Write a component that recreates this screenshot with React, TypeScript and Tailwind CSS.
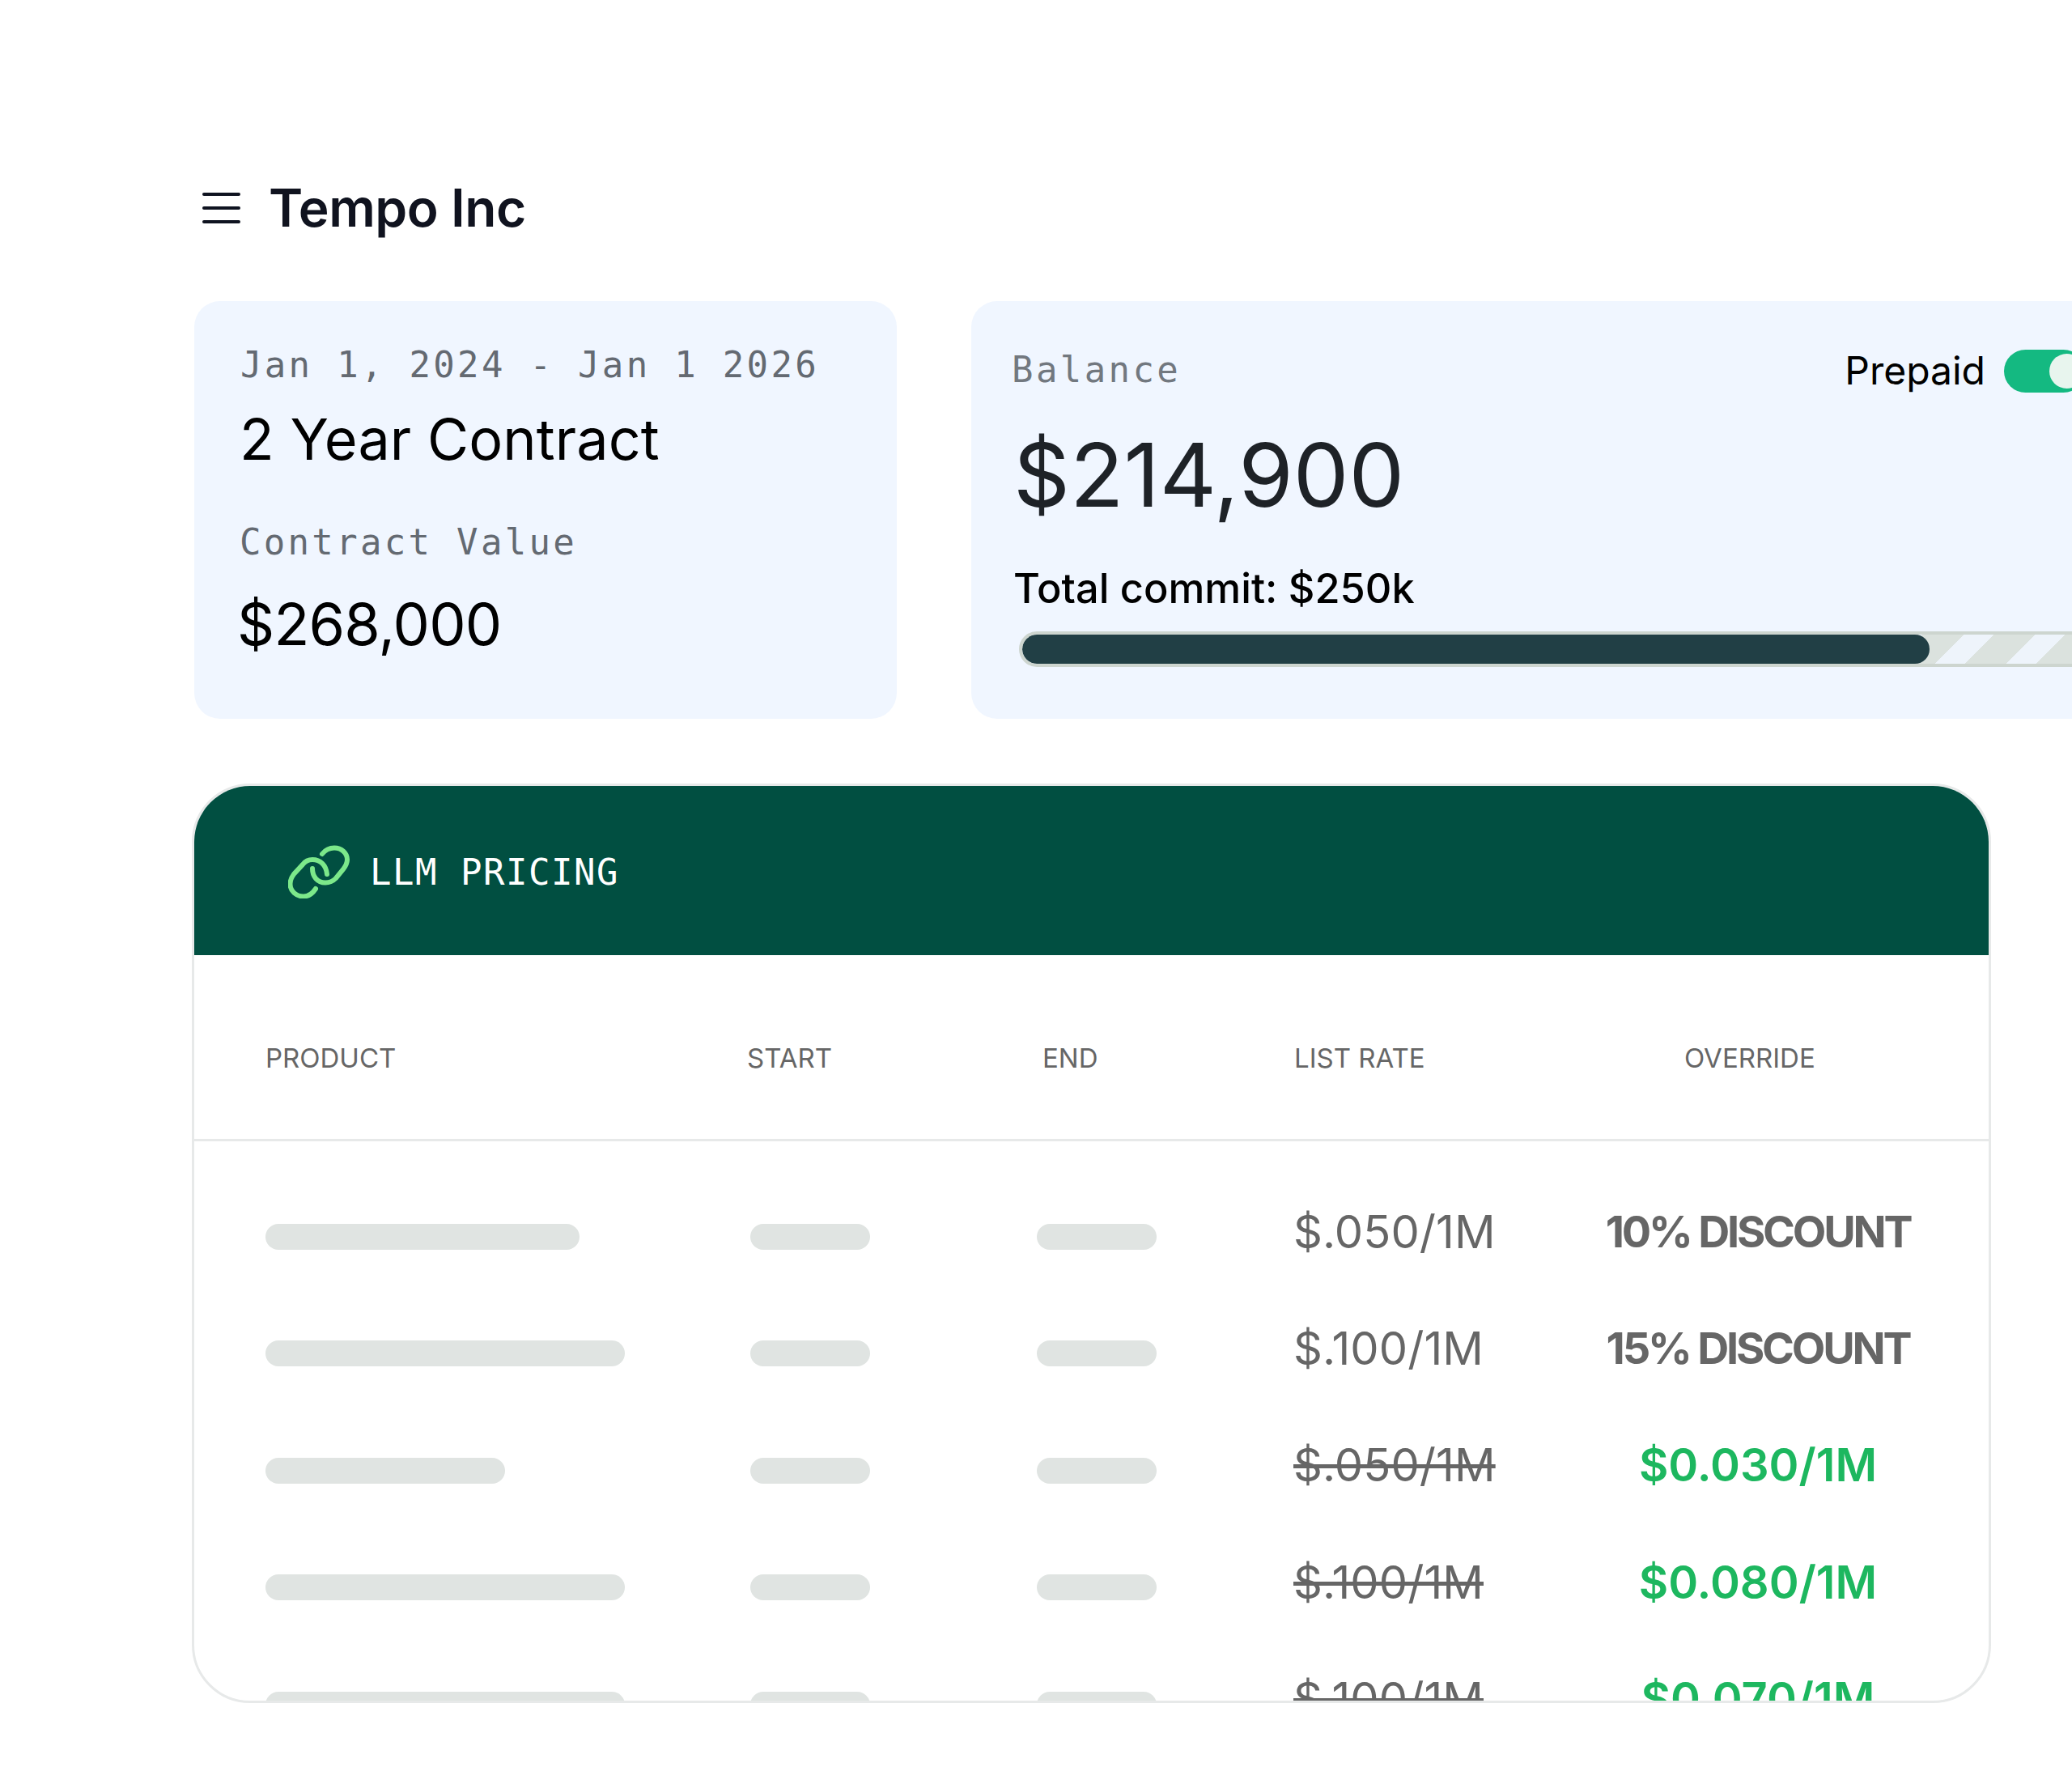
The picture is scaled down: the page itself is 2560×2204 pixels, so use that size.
const mono = "font-['DejaVu_Sans_Mono',monospace]";

const rows = [
  { bar: 'w-[388px]', list: '$.050/1M', override: '10% DISCOUNT', green: false },
  { bar: 'w-[444px]', list: '$.100/1M', override: '15% DISCOUNT', green: false },
  { bar: 'w-[296px]', list: '$.050/1M', override: '$0.030/1M', green: true },
  { bar: 'w-[444px]', list: '$.100/1M', override: '$0.080/1M', green: true },
  { bar: 'w-[444px]', list: '$.100/1M', override: '$0.070/1M', green: true },
];

function LinkIcon() {
  return (
    <svg className="mt-[2px]" width="76" height="66" viewBox="0 0 76 66" fill="none" stroke="#7CE88A" strokeWidth="6" strokeLinecap="round">
      <path d="M42 11C46 6 51 3.5 57 3.5C66 3.5 73 10 73 18C73 23 71 26 68 30L59 41C55 45 51 46.5 46 46.5C36 46.5 30 39 30 29" />
      <path d="M48 36C47 25 40 18 30 18C25 18 21 20 18 24L7 36C4 40 2.5 44 2.5 48C2.5 57 10 63.5 19 63.5C25 63.5 30 60 34 54" />
    </svg>
  );
}

export default function App() {
  return (
    <div className="w-[2560px] h-[2204px] overflow-hidden bg-white pl-[240px] pt-[219px] font-['Inter',sans-serif]">
      {/* Title */}
      <div className="flex items-center h-[76px]">
        <div className="flex flex-col gap-[13px] w-[47px] ml-[10px]">
          <div className="h-[4px] bg-[#0f1320] rounded-full" />
          <div className="h-[4px] bg-[#0f1320] rounded-full" />
          <div className="h-[4px] bg-[#0f1320] rounded-full" />
        </div>
        <h1 className="ml-[35px] text-[64px] leading-[76px] font-semibold text-[#10131f] tracking-[-0.45px]">Tempo Inc</h1>
      </div>

      {/* Summary cards */}
      <div className="flex gap-[92px] mt-[77px] h-[516px] w-[2400px]">
        <div className="w-[868px] shrink-0 rounded-[32px] bg-[#f0f6ff] pl-[57px] pt-[53px]">
          <p className={`${mono} text-[44px] leading-[52px] tracking-[3.3px] text-[#646a72]`}>Jan 1, 2024 - Jan 1 2026</p>
          <p className="mt-[25px] -ml-[1px] text-[70px] leading-[82px] tracking-[0.1px] text-black">2 Year Contract</p>
          <p className={`${mono} mt-[60px] -ml-[1px] text-[44px] leading-[52px] tracking-[3.3px] text-[#646a72]`}>Contract Value</p>
          <p className="mt-[33px] text-[72px] leading-[84px] tracking-[-0.8px] text-black -ml-[4px]">$268,000</p>
        </div>

        <div className="w-[1500px] shrink-0 rounded-[32px] bg-[#f0f6ff] pl-[50px] pt-[53px]">
          <div className="flex items-center justify-between h-[64px] w-[1400px]">
            <p className={`${mono} text-[44px] leading-[52px] tracking-[3.4px] text-[#72787f]`}>Balance</p>
            <div className="flex items-center gap-[23px] mr-[74px] mt-[2px]">
              <span className="text-[48px] leading-[56px] text-black">Prepaid</span>
              <div className="w-[100px] h-[53px] rounded-full bg-[#14b981] pl-[56px] pt-[5px]">
                <div className="w-[43px] h-[43px] rounded-full bg-[#e8f5ee]" />
              </div>
            </div>
          </div>
          <p className="mt-[34px] ml-[2px] text-[109px] leading-[126px] text-[#1e2227]">$214,900</p>
          <p className="mt-[47px] ml-[2px] text-[50.5px] leading-[62px] font-medium text-black">Total commit: $250k</p>
          <div className="mt-[22px] ml-[9px] w-[1500px] h-[44px] rounded-full border-4 border-[#cdd5cf] bg-[#dbe2de] bg-[repeating-linear-gradient(135deg,#dbe2de_0px,#dbe2de_14px,#eef4fb_14px,#eef4fb_40px,#dbe2de_40px,#dbe2de_62.2px)] overflow-hidden">
            <div className="w-[1121px] h-full rounded-full bg-[#213f45]" />
          </div>
        </div>
      </div>

      {/* Pricing table */}
      <div className="mt-[80px] -ml-[3px] w-[2223px] h-[1136px] rounded-[72px] border-[3px] border-[#e7e9e9] bg-white overflow-hidden">
        <div className="flex items-center h-[209px] bg-[#014f41] pl-[116px]">
          <LinkIcon />
          <span className={`${mono} ml-[25px] mt-[4px] text-[44px] leading-[52px] tracking-[1.5px] text-white`}>LLM PRICING</span>
        </div>

        <div className="grid grid-cols-[595px_365px_311px_386px_1fr] items-center h-[230px] pl-[88px] pt-[26px] border-b-[3px] border-[#e7e9e9] text-[33px] leading-[40px] text-[#666666]">
          <span>PRODUCT</span>
          <span>START</span>
          <span>END</span>
          <span>LIST RATE</span>
          <span className="pl-[96px]">OVERRIDE</span>
        </div>

        <div className="pt-[72px] flex flex-col gap-[64.4px]">
          {rows.map((row, index) => (
            <div key={index} className="grid grid-cols-[599px_354px_318px_386px_376px] items-center h-[80px] pl-[88px]">
              <div className={`${row.bar} h-[32px] mt-[12px] rounded-full bg-[#e0e4e2]`} />
              <div className="w-[148px] h-[32px] mt-[12px] rounded-full bg-[#e0e4e2]" />
              <div className="w-[148px] h-[32px] mt-[12px] rounded-full bg-[#e0e4e2]" />
              <span className={`-ml-[1px] -mt-[1px] text-[56px] leading-[80px] tracking-[0.1px] whitespace-nowrap text-[#666666] ${row.green ? 'line-through' : ''}`}>{row.list}</span>
              <span className={`-mt-[1px] -ml-[2px] text-center whitespace-nowrap leading-[80px] ${row.green ? 'text-[56px] font-semibold text-[#1db75f]' : 'text-[54px] font-bold text-[#666666] tracking-[-3.2px]'}`}>{row.override}</span>
            </div>
          ))}
        </div>
      </div>
    </div>
  );
}
